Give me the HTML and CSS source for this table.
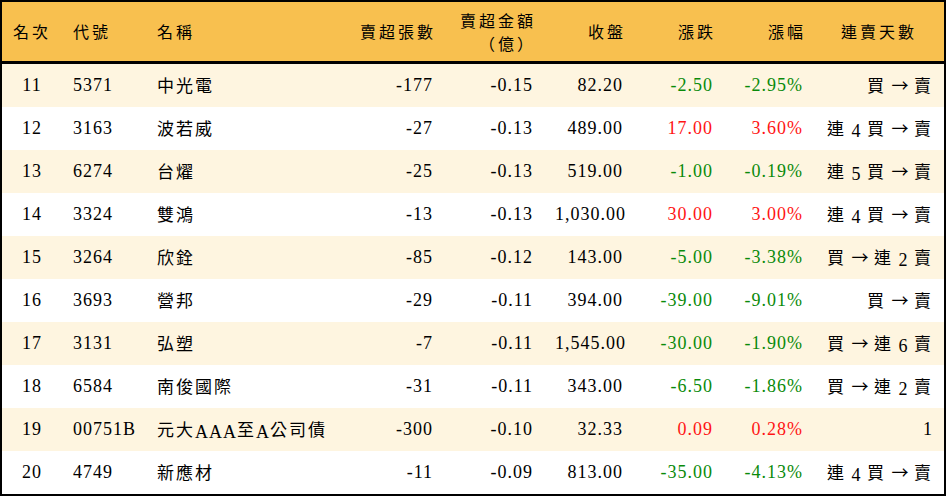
FILE: index.html
```html
<!DOCTYPE html>
<html lang="zh-Hant">
<head>
<meta charset="utf-8">
<link rel="stylesheet" href="styles.css">
</head>
<body>
<div class="frame">
<table class="rank">
  <colgroup>
    <col class="c1"><col class="c2"><col class="c3"><col class="c4"><col class="c5"><col class="c6"><col class="c7"><col class="c8"><col class="c9">
  </colgroup>
  <thead>
    <tr>
      <th class="ctr">名次</th>
      <th class="lft">代號</th>
      <th class="lft">名稱</th>
      <th class="rgt">賣超張數</th>
      <th class="rgt"><span class="ln">賣超金額</span><span class="ln">（億）</span></th>
      <th class="rgt">收盤</th>
      <th class="rgt">漲跌</th>
      <th class="rgt">漲幅</th>
      <th class="ctr">連賣天數</th>
    </tr>
  </thead>
  <tbody>
    <tr><td class="ctr">11</td><td class="lft">5371</td><td class="lft"><span class="zh">中光電</span></td><td class="rgt">-177</td><td class="rgt">-0.15</td><td class="rgt">82.20</td><td class="rgt dn">-2.50</td><td class="rgt dn">-2.95%</td><td class="rgt"><span class="zh">買</span> <span class="arw">→</span> <span class="zh">賣</span></td></tr>
    <tr><td class="ctr">12</td><td class="lft">3163</td><td class="lft"><span class="zh">波若威</span></td><td class="rgt">-27</td><td class="rgt">-0.13</td><td class="rgt">489.00</td><td class="rgt up">17.00</td><td class="rgt up">3.60%</td><td class="rgt"><span class="zh">連</span> 4 <span class="zh">買</span> <span class="arw">→</span> <span class="zh">賣</span></td></tr>
    <tr><td class="ctr">13</td><td class="lft">6274</td><td class="lft"><span class="zh">台燿</span></td><td class="rgt">-25</td><td class="rgt">-0.13</td><td class="rgt">519.00</td><td class="rgt dn">-1.00</td><td class="rgt dn">-0.19%</td><td class="rgt"><span class="zh">連</span> 5 <span class="zh">買</span> <span class="arw">→</span> <span class="zh">賣</span></td></tr>
    <tr><td class="ctr">14</td><td class="lft">3324</td><td class="lft"><span class="zh">雙鴻</span></td><td class="rgt">-13</td><td class="rgt">-0.13</td><td class="rgt">1,030.00</td><td class="rgt up">30.00</td><td class="rgt up">3.00%</td><td class="rgt"><span class="zh">連</span> 4 <span class="zh">買</span> <span class="arw">→</span> <span class="zh">賣</span></td></tr>
    <tr><td class="ctr">15</td><td class="lft">3264</td><td class="lft"><span class="zh">欣銓</span></td><td class="rgt">-85</td><td class="rgt">-0.12</td><td class="rgt">143.00</td><td class="rgt dn">-5.00</td><td class="rgt dn">-3.38%</td><td class="rgt"><span class="zh">買</span> <span class="arw">→</span> <span class="zh">連</span> 2 <span class="zh">賣</span></td></tr>
    <tr><td class="ctr">16</td><td class="lft">3693</td><td class="lft"><span class="zh">營邦</span></td><td class="rgt">-29</td><td class="rgt">-0.11</td><td class="rgt">394.00</td><td class="rgt dn">-39.00</td><td class="rgt dn">-9.01%</td><td class="rgt"><span class="zh">買</span> <span class="arw">→</span> <span class="zh">賣</span></td></tr>
    <tr><td class="ctr">17</td><td class="lft">3131</td><td class="lft"><span class="zh">弘塑</span></td><td class="rgt">-7</td><td class="rgt">-0.11</td><td class="rgt">1,545.00</td><td class="rgt dn">-30.00</td><td class="rgt dn">-1.90%</td><td class="rgt"><span class="zh">買</span> <span class="arw">→</span> <span class="zh">連</span> 6 <span class="zh">賣</span></td></tr>
    <tr><td class="ctr">18</td><td class="lft">6584</td><td class="lft"><span class="zh">南俊國際</span></td><td class="rgt">-31</td><td class="rgt">-0.11</td><td class="rgt">343.00</td><td class="rgt dn">-6.50</td><td class="rgt dn">-1.86%</td><td class="rgt"><span class="zh">買</span> <span class="arw">→</span> <span class="zh">連</span> 2 <span class="zh">賣</span></td></tr>
    <tr><td class="ctr">19</td><td class="lft">00751B</td><td class="lft"><span class="zh">元大</span>AAA<span class="zh">至</span>A<span class="zh">公司債</span></td><td class="rgt">-300</td><td class="rgt">-0.10</td><td class="rgt">32.33</td><td class="rgt up">0.09</td><td class="rgt up">0.28%</td><td class="rgt">1</td></tr>
    <tr><td class="ctr">20</td><td class="lft">4749</td><td class="lft"><span class="zh">新應材</span></td><td class="rgt">-11</td><td class="rgt">-0.09</td><td class="rgt">813.00</td><td class="rgt dn">-35.00</td><td class="rgt dn">-4.13%</td><td class="rgt"><span class="zh">連</span> 4 <span class="zh">買</span> <span class="arw">→</span> <span class="zh">賣</span></td></tr>
  </tbody>
</table>
</div>
</body>
</html>
```

FILE: styles.css
```css
html, body {
  margin: 0;
  padding: 0;
  background: #ffffff;
}
.frame {
  width: 946px;
  height: 496px;
  box-sizing: border-box;
  border: 2px solid #000;
  overflow: hidden;
}
.rank {
  width: 942px;
  border-collapse: collapse;
  table-layout: fixed;
  font-family: "Liberation Serif", "Noto Sans CJK TC", serif;
  font-size: 18px;
  letter-spacing: 1px;
  color: #000;
}
.c1 { width: 60px; }
.c2 { width: 84px; }
.c3 { width: 198px; }
.c4 { width: 100px; }
.c5 { width: 100px; }
.c6 { width: 90px; }
.c7 { width: 90px; }
.c8 { width: 90px; }
.c9 { width: 130px; }
.rank th {
  height: 59px;
  padding: 0 11px;
  background: #f8c04f;
  border-bottom: 3px solid #000;
  font-family: "Noto Sans CJK TC", sans-serif;
  font-weight: normal;
  font-size: 16px;
  letter-spacing: 3px;
  line-height: 23px;
  white-space: nowrap;
}
.ln {
  display: block;
  line-height: 23px;
}
.rank td {
  height: 43px;
  padding: 0 11px;
  white-space: nowrap;
}
.rank tbody tr:nth-child(odd) td {
  background: #fef5e0;
}
.zh {
  font-family: "Noto Sans CJK TC", sans-serif;
  font-size: 17px;
  letter-spacing: 2px;
  vertical-align: 2px;
}
.arw {
  font-family: "Noto Sans CJK TC", sans-serif;
  font-size: 17px;
  vertical-align: 2px;
  letter-spacing: 0;
}
.ctr { text-align: center; }
.lft { text-align: left; }
.rgt { text-align: right; }
.rank th.rgt { padding-right: 8px; }
.rank .dn { color: #0a8a0a; }
.rank .up { color: #ff1414; }
```
